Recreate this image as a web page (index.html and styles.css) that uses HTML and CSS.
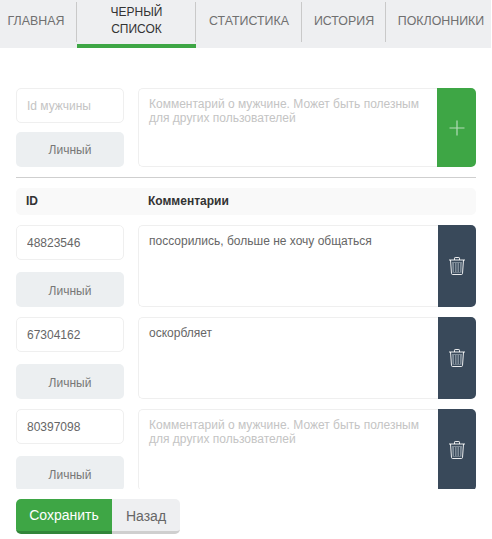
FILE: index.html
```html
<!DOCTYPE html>
<html lang="en">
<head>
    <meta charset="utf-8"/>
    <title>Черный список</title>
    <link rel="stylesheet" href="styles.css">
</head>
<body>
    <nav class="tabs">
        <a class="tab tab-first">Главная</a>
        <a class="tab tab-active">Черный<br>список</a>
        <a class="tab">Статистика</a>
        <a class="tab">История</a>
        <a class="tab tab-last">Поклонники</a>
    </nav>

    <main class="content">
        <div class="row row-new">
            <div class="side">
                <input class="field" type="text" placeholder="Id мужчины"/>
                <div class="kind">Личный</div>
            </div>
            <textarea class="comment" placeholder="Комментарий о мужчине. Может быть полезным для других пользователей"></textarea>
            <button class="action action-add" type="button">
                <svg width="16" height="16" viewBox="0 0 16 16"><path d="M8 0.5V15.5M0.5 8H15.5" stroke="#b5dcb9" stroke-width="1.2" fill="none"/></svg>
            </button>
        </div>

        <div class="divider"></div>

        <div class="head">
            <div class="head-id">ID</div>
            <div>Комментарии</div>
        </div>

        <div class="list">
            <div class="row">
                <div class="side">
                    <input class="field" type="text" value="48823546"/>
                    <div class="kind kind-low">Личный</div>
                </div>
                <textarea class="comment">поссорились, больше не хочу общаться</textarea>
                <button class="action action-del" type="button">
                    <svg width="18" height="20" viewBox="0 0 18 20"><use href="#trash"/></svg>
                </button>
            </div>
            <div class="row">
                <div class="side">
                    <input class="field" type="text" value="67304162"/>
                    <div class="kind kind-low">Личный</div>
                </div>
                <textarea class="comment">оскорбляет</textarea>
                <button class="action action-del" type="button">
                    <svg width="18" height="20" viewBox="0 0 18 20"><use href="#trash"/></svg>
                </button>
            </div>
            <div class="row">
                <div class="side">
                    <input class="field" type="text" value="80397098"/>
                    <div class="kind kind-low">Личный</div>
                </div>
                <textarea class="comment" placeholder="Комментарий о мужчине. Может быть полезным для других пользователей"></textarea>
                <button class="action action-del" type="button">
                    <svg width="18" height="20" viewBox="0 0 18 20"><use href="#trash"/></svg>
                </button>
            </div>
        </div>

        <div class="buttons">
            <button class="btn btn-save" type="button">Сохранить</button>
            <button class="btn btn-back" type="button">Назад</button>
        </div>
    </main>

    <svg class="defs" width="0" height="0">
        <symbol id="trash" viewBox="0 0 18 20">
            <path d="M1 4H17M6.500 4V2.200Q6.500 1.500 7.200 1.500H10.800Q11.500 1.500 11.500 2.200V4" stroke="#fff" stroke-width="0.9" fill="none"/>
            <path d="M2.500 4L3.500 17.500Q3.600 18.500 4.600 18.500H13.400Q14.400 18.500 14.500 17.500L15.500 4" stroke="#fff" stroke-width="0.9" fill="none"/>
            <path d="M4 6H14L13.400 16.800H4.600Z" fill="#7f8c98"/>
            <path d="M6.500 7V16M9 7V16M11.500 7V16" stroke="#39495a" stroke-width="1" fill="none"/>
        </symbol>
    </svg>
</body>
</html>
```

FILE: styles.css
```css
* {
    box-sizing: border-box;
}

body {
    margin: 0;
    height: 539px;
    overflow: hidden;
    background-color: #ffffff;
    font-family: "Liberation Sans", Arial, sans-serif;
    font-size: 12px;
    color: #666;
    display: flex;
    flex-direction: column;
}

.tabs {
    display: grid;
    grid-template-columns: 77px 119px 106px 84px 1fr;
    height: 48px;
    flex: none;
    background-color: #eeeff1;
    margin-right: 1px;
}

.tab {
    height: 48px;
    padding-bottom: 6px;
    display: flex;
    align-items: center;
    justify-content: center;
    text-align: center;
    text-transform: uppercase;
    font-size: 12.4px;
    line-height: 17px;
    color: #707070;
    position: relative;
}

.tab::after {
    content: "";
    position: absolute;
    right: 0;
    top: 2px;
    height: 40px;
    width: 1px;
    background-color: #c9c9c9;
}

.tab-first {
    padding-right: 5px;
}

.tab-last {
    padding-left: 5px;
}

.tab-last::after {
    display: none;
}

.tab-active {
    font-size: 12px;
    color: #333;
    border-bottom: 4px solid #3ea645;
    padding-bottom: 2px;
}

.content {
    flex: 1;
    min-height: 0;
    padding: 40px 16px 5px;
    display: flex;
    flex-direction: column;
}

.row {
    display: flex;
    height: 82px;
    flex: none;
    margin-bottom: 10px;
}

.row-new {
    height: 79px;
    margin-bottom: 10px;
}

.side {
    width: 108px;
    margin-right: 14px;
    display: flex;
    flex-direction: column;
    justify-content: space-between;
    flex: none;
}

.field {
    height: 35px;
    width: 100%;
    padding: 0 10px;
    border: 1px solid #efefef;
    border-radius: 5px;
    font-family: inherit;
    font-size: 12px;
    color: #666;
    outline: none;
}

.field::placeholder,
.comment::placeholder {
    color: #c4c4c4;
    opacity: 1;
}

.kind {
    height: 35px;
    background-color: #eceff1;
    border-radius: 5px;
    display: flex;
    align-items: center;
    justify-content: center;
    color: #777;
}

.kind-low {
    padding-top: 2px;
}

.comment {
    flex: 1;
    min-width: 0;
    padding: 8px 10px;
    border: 1px solid #efefef;
    border-right: none;
    border-radius: 5px 0 0 5px;
    font-family: inherit;
    font-size: 12px;
    line-height: 14px;
    color: #666;
    resize: none;
    outline: none;
    overflow: hidden;
}

.action {
    width: 38px;
    flex: none;
    border: none;
    padding: 0;
    border-radius: 0 5px 5px 0;
    display: flex;
    align-items: center;
    justify-content: center;
}

.action-add {
    width: 39px;
    background-color: #3ea645;
}

.action-del {
    background-color: #39495a;
}

.divider {
    height: 1px;
    background-color: #cfcfcf;
    flex: none;
}

.head {
    display: flex;
    align-items: center;
    height: 27px;
    padding-bottom: 2px;
    margin-top: 10px;
    margin-bottom: 10px;
    flex: none;
    background-color: #f9f9f9;
    border-radius: 5px;
    font-weight: bold;
    color: #333;
}

.head-id {
    width: 132px;
    padding-left: 10px;
}

.list {
    height: 264px;
    flex: none;
    overflow: hidden;
}

.buttons {
    display: flex;
    margin-top: 10px;
}

.btn {
    height: 35px;
    border: none;
    font-family: "Liberation Sans", Arial, sans-serif;
    font-size: 14px;
    padding: 0;
}

.btn-save {
    width: 96px;
    color: #fff;
    background-color: #3ea645;
    border-bottom: 3px solid #32853a;
    border-radius: 5px 0 0 5px;
}

.btn-back {
    width: 68px;
    padding-top: 2px;
    color: #666;
    background-color: #eeeff1;
    border-bottom: 3px solid #cfcfcf;
    border-radius: 0 5px 5px 0;
}

.defs {
    position: absolute;
}
```
